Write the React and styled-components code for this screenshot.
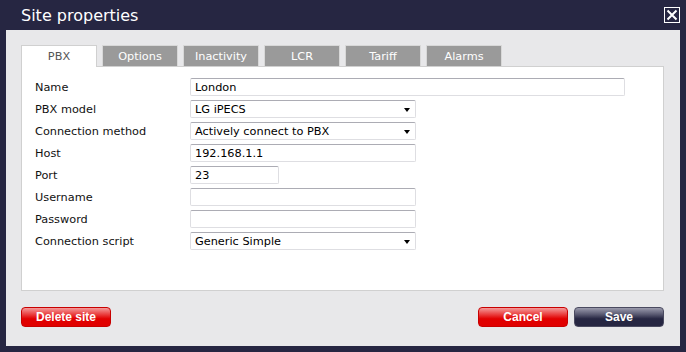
import React from "react";
import styled, { createGlobalStyle } from "styled-components";

const Global = createGlobalStyle`
  html, body {
    margin: 0;
    padding: 0;
    background: #262642;
  }
  body {
    font-family: "DejaVu Sans", Verdana, sans-serif;
  }
`;

const Dialog = styled.div`
  width: 686px;
  height: 352px;
  display: flex;
  flex-direction: column;
  background: #262642;
  padding: 0 6px 6px;
  box-sizing: border-box;
`;

const TitleBar = styled.div`
  height: 30px;
  display: flex;
  align-items: center;
  justify-content: space-between;
  padding: 0 0 0 15px;
`;

const Title = styled.h1`
  margin: 0;
  font-size: 16px;
  font-weight: normal;
  color: #fff;
  line-height: 1;
  margin-top: 2px;
`;

const CloseButton = styled.button`
  width: 16px;
  height: 16px;
  padding: 0;
  border: 1px solid #fff;
  background: transparent;
  display: flex;
  align-items: center;
  justify-content: center;
  cursor: pointer;
`;

const Body = styled.div`
  flex: 1;
  background: #e8e8ea;
  padding: 15px 16px 0 15px;
  display: flex;
  flex-direction: column;
`;

const Tabs = styled.div`
  display: flex;
  gap: 5px;
  height: 21px;
`;

const Tab = styled.div`
  width: 76px;
  box-sizing: border-box;
  height: 21px;
  display: flex;
  align-items: center;
  justify-content: center;
  font-size: 11.3px;
  color: ${(p) => (p.$active ? "#555" : "#fff")};
  background: ${(p) => (p.$active ? "#fff" : "#9a9a9a")};
  border: 1px solid ${(p) => (p.$active ? "#d0d0d0" : "#d8d8d8")};
  border-bottom: none;
  position: relative;
  z-index: ${(p) => (p.$active ? 1 : 0)};
  margin-bottom: ${(p) => (p.$active ? "-1px" : "0")};
  height: ${(p) => (p.$active ? "22px" : "21px")};
`;

const Panel = styled.div`
  height: 225px;
  box-sizing: border-box;
  background: #fff;
  border: 1px solid #d0d0d0;
  padding: 11px 13px;
`;

const Form = styled.div`
  display: grid;
  grid-template-columns: 155px auto;
  grid-auto-rows: 18px;
  row-gap: 4px;
  align-items: center;
`;

const Label = styled.label`
  font-size: 11.3px;
  color: #111;
`;

const Field = styled.div`
  width: ${(p) => p.$w}px;
  height: 18px;
  box-sizing: border-box;
  border: 1px solid #dedee2;
  border-top-color: #acacb4;
  border-radius: 2px;
  display: flex;
  align-items: center;
  justify-content: space-between;
  padding: 0 4px 0 4px;
  font-size: 11.3px;
  color: #000;
  background: #fff;
`;

const Arrow = styled.span`
  width: 0;
  height: 0;
  border-left: 3.5px solid transparent;
  border-right: 3.5px solid transparent;
  border-top: 4px solid #000;
  margin-top: 2px;
  margin-right: 1px;
`;

const Footer = styled.div`
  display: flex;
  align-items: center;
  margin-top: 16px;
  gap: 6px;
`;

const Button = styled.button`
  width: 90px;
  height: 20px;
  padding: 0;
  border-radius: 4px;
  font-family: "Liberation Sans", Arial, sans-serif;
  font-weight: bold;
  font-size: 12px;
  color: #fff;
  cursor: pointer;
  border: 1px solid ${(p) => (p.$dark ? "#4a4a60" : "#c80000")};
  background: ${(p) =>
    p.$dark
      ? "linear-gradient(to bottom, #9a9aac 0%, #5a5a72 35%, #262642 60%, #262642 100%)"
      : "linear-gradient(to bottom, #f49a9a 0%, #ea4040 35%, #e10000 60%, #e00000 100%)"};
  margin-left: ${(p) => (p.$push ? "auto" : "0")};
`;

const rows = [
  { label: "Name", value: "London", w: 435 },
  { label: "PBX model", value: "LG iPECS", w: 226, select: true },
  { label: "Connection method", value: "Actively connect to PBX", w: 226, select: true },
  { label: "Host", value: "192.168.1.1", w: 226 },
  { label: "Port", value: "23", w: 89 },
  { label: "Username", value: "", w: 226 },
  { label: "Password", value: "", w: 226 },
  { label: "Connection script", value: "Generic Simple", w: 226, select: true },
];

const tabs = ["PBX", "Options", "Inactivity", "LCR", "Tariff", "Alarms"];

export default function App() {
  return (
    <>
      <Global />
      <Dialog>
        <TitleBar>
          <Title>Site properties</Title>
          <CloseButton aria-label="Close">
            <svg width="12" height="12" viewBox="0 0 12 12">
              <path d="M1.5 1.5 L10.5 10.5 M10.5 1.5 L1.5 10.5" stroke="#fff" strokeWidth="2" />
            </svg>
          </CloseButton>
        </TitleBar>
        <Body>
          <Tabs>
            {tabs.map((t, i) => (
              <Tab key={t} $active={i === 0}>
                {t}
              </Tab>
            ))}
          </Tabs>
          <Panel>
            <Form>
              {rows.map((r) => (
                <React.Fragment key={r.label}>
                  <Label>{r.label}</Label>
                  <Field $w={r.w}>
                    <span>{r.value}</span>
                    {r.select && <Arrow />}
                  </Field>
                </React.Fragment>
              ))}
            </Form>
          </Panel>
          <Footer>
            <Button>Delete site</Button>
            <Button $push>Cancel</Button>
            <Button $dark>Save</Button>
          </Footer>
        </Body>
      </Dialog>
    </>
  );
}
